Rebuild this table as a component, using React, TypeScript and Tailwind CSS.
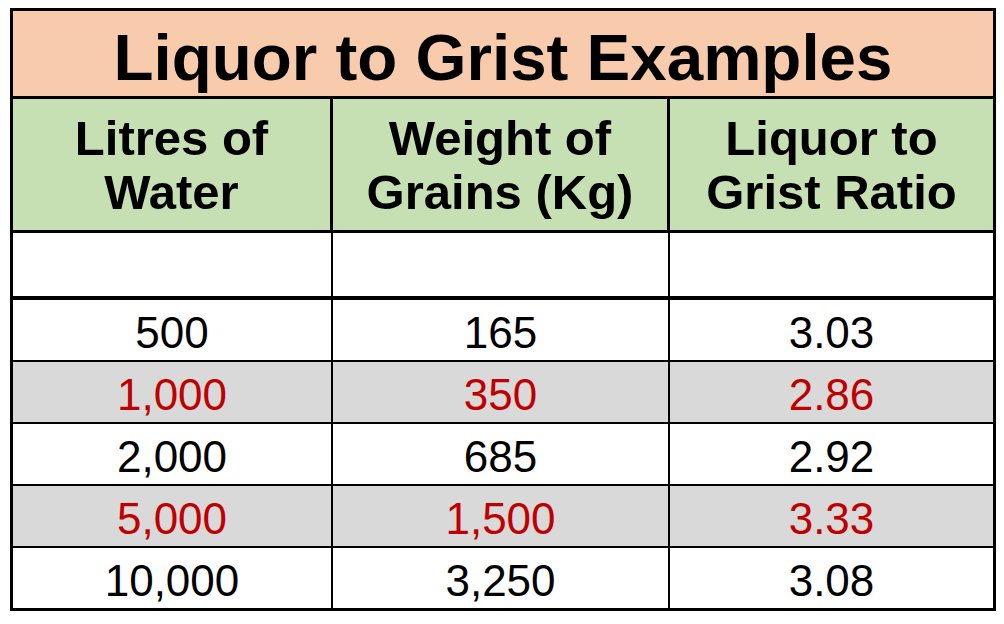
const rows = [
  { water: '500', grains: '165', ratio: '3.03', shaded: false },
  { water: '1,000', grains: '350', ratio: '2.86', shaded: true },
  { water: '2,000', grains: '685', ratio: '2.92', shaded: false },
  { water: '5,000', grains: '1,500', ratio: '3.33', shaded: true },
  { water: '10,000', grains: '3,250', ratio: '3.08', shaded: false },
];

const font = { fontFamily: '"Liberation Sans", Arial, sans-serif' };

export default function App() {
  return (
    <div className="w-[1004px] h-[624px] bg-white pt-[8px] pl-[10px]" style={font}>
      <div className="w-[986px] border-[3px] border-black flex flex-col">
        {/* Title */}
        <div className="h-[88px] bg-[#F8CBAD] border-b-[3px] border-black flex items-center justify-center pt-[9px]">
          <span className="text-[65.5px] font-bold text-black leading-none">Liquor to Grist Examples</span>
        </div>

        {/* Column headers */}
        <div className="h-[134px] bg-[#C6E0B4] border-b-[3px] border-black flex text-[49px] font-bold leading-[54px] text-black text-center">
          <div className="w-[317px] flex items-center justify-center">
            <div>Litres of<br />Water</div>
          </div>
          <div className="w-[337px] border-l-[3px] border-black flex items-center justify-center">
            <div>Weight of<br />Grains (Kg)</div>
          </div>
          <div className="flex-1 border-l-[3px] border-black flex items-center justify-center">
            <div>Liquor to<br />Grist Ratio</div>
          </div>
        </div>

        {/* Empty row */}
        <div className="h-[67px] border-b-[4px] border-black flex">
          <div className="w-[318px]" />
          <div className="w-[337px] border-l-2 border-black" />
          <div className="flex-1 border-l-2 border-black" />
        </div>

        {/* Data */}
        {rows.map((r, i) => (
          <div
            key={r.water}
            className={`flex text-[44px] leading-none ${r.shaded ? 'bg-[#D9D9D9] text-[#C00000]' : 'bg-white text-black'} ${i < rows.length - 1 ? 'h-[62px] border-b-2 border-black' : 'h-[60px]'}`}
          >
            <div className="w-[318px] flex items-center justify-center pt-[6px]">{r.water}</div>
            <div className="w-[337px] border-l-2 border-black flex items-center justify-center pt-[6px]">{r.grains}</div>
            <div className="flex-1 border-l-2 border-black flex items-center justify-center pt-[6px]">{r.ratio}</div>
          </div>
        ))}
      </div>
    </div>
  );
}
